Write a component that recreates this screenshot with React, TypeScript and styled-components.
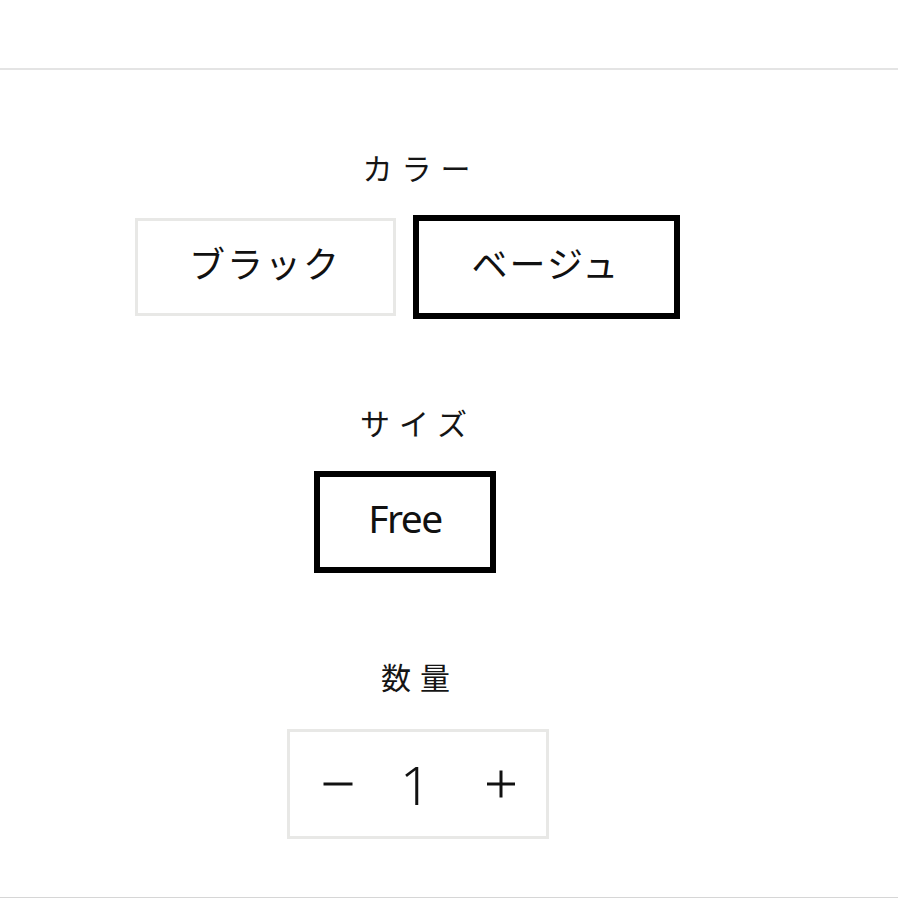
import React, { useState } from "react";
import styled, { createGlobalStyle } from "styled-components";

const GlobalStyle = createGlobalStyle`
  html, body {
    margin: 0;
    padding: 0;
    background: #ffffff;
  }
  body {
    font-family: "Noto Sans CJK JP", "Noto Sans", sans-serif;
    color: #111111;
  }
`;

const Page = styled.div`
  width: 898px;
  height: 898px;
  display: flex;
  flex-direction: column;
  background: #ffffff;
  box-sizing: border-box;
  border-bottom: 1px solid #d6d6d6;
  overflow: hidden;
`;

const TopBar = styled.div`
  height: 68px;
  flex: none;
  border-bottom: 2px solid #e4e4e4;
`;

const Main = styled.main`
  display: flex;
  flex-direction: column;
  align-items: center;
  padding: 83px 78px 0 0;
  gap: 89px;
`;

const Section = styled.section<{ $gap: number; $shift?: number }>`
  display: flex;
  flex-direction: column;
  align-items: center;
  gap: ${(p) => p.$gap}px;
  transform: translateX(${(p) => p.$shift ?? 0}px);
`;

const Label = styled.div<{ $pad: number }>`
  font-family: "Noto Sans CJK JP", sans-serif;
  font-size: 30px;
  font-weight: 400;
  line-height: 28px;
  letter-spacing: 9px;
  padding-left: ${(p) => p.$pad}px;
  color: #151515;
`;

const OptionRow = styled.div`
  display: flex;
  align-items: center;
  gap: 17px;
`;

const Option = styled.button<{ $selected: boolean; $w: number; $h: number }>`
  box-sizing: content-box;
  width: ${(p) => p.$w}px;
  height: ${(p) => p.$h}px;
  padding: 0 0 10px;
  margin: 0;
  background: #ffffff;
  border: ${(p) => (p.$selected ? "6px solid #000000" : "3px solid #e8e8e6")};
  display: flex;
  align-items: center;
  justify-content: center;
  color: #111111;
  cursor: pointer;
`;

const OptionText = styled.span`
  font-family: "Noto Sans CJK JP", sans-serif;
  font-size: 36px;
  font-weight: 400;
  letter-spacing: 2px;
  line-height: 1;
`;

const LatinText = styled.span`
  font-family: "Noto Sans", sans-serif;
  font-size: 39px;
  letter-spacing: -1.5px;
  line-height: 1;
`;

const QtyBox = styled.div`
  box-sizing: border-box;
  width: 262px;
  height: 110px;
  border: 3px solid #e8e8e6;
  display: flex;
  align-items: center;
  justify-content: space-between;
  padding: 0 30px 0 33px;
`;

const StepButton = styled.button`
  width: 30px;
  height: 30px;
  padding: 0;
  border: none;
  background: transparent;
  display: flex;
  align-items: center;
  justify-content: center;
  cursor: pointer;
  color: #111111;
`;

const QtyValue = styled.span`
  font-family: "Noto Sans", sans-serif;
  font-size: 54px;
  font-weight: 300;
  line-height: 1;
  margin-right: 8px;
  color: #111111;
`;

const colors = ["ブラック", "ベージュ"];

export default function App() {
  const [color, setColor] = useState(1);
  const [qty, setQty] = useState(1);

  return (
    <>
      <GlobalStyle />
      <Page>
        <TopBar />
        <Main>
          <Section $gap={34} $shift={-3}>
            <Label $pad={28}>カラー</Label>
            <OptionRow>
              {colors.map((c, i) => (
                <Option
                  key={c}
                  $selected={color === i}
                  $w={255}
                  $h={82}
                  onClick={() => setColor(i)}
                >
                  <OptionText>{c}</OptionText>
                </Option>
              ))}
            </OptionRow>
          </Section>
          <Section $gap={35} $shift={-5}>
            <Label $pad={26}>サイズ</Label>
            <Option $selected $w={170} $h={80}>
              <LatinText>Free</LatinText>
            </Option>
          </Section>
          <Section $gap={39} $shift={8}>
            <Label $pad={4}>数量</Label>
            <QtyBox>
              <StepButton aria-label="decrease" onClick={() => setQty((q) => Math.max(1, q - 1))}>
                <svg width="30" height="30" viewBox="0 0 30 30">
                  <line x1="0.5" y1="15" x2="29.5" y2="15" stroke="#111" strokeWidth="3" />
                </svg>
              </StepButton>
              <QtyValue>{qty}</QtyValue>
              <StepButton aria-label="increase" onClick={() => setQty((q) => q + 1)}>
                <svg width="30" height="30" viewBox="0 0 30 30">
                  <line x1="1" y1="15" x2="29" y2="15" stroke="#111" strokeWidth="3" />
                  <line x1="15" y1="1.5" x2="15" y2="28.5" stroke="#111" strokeWidth="3" />
                </svg>
              </StepButton>
            </QtyBox>
          </Section>
        </Main>
      </Page>
    </>
  );
}
